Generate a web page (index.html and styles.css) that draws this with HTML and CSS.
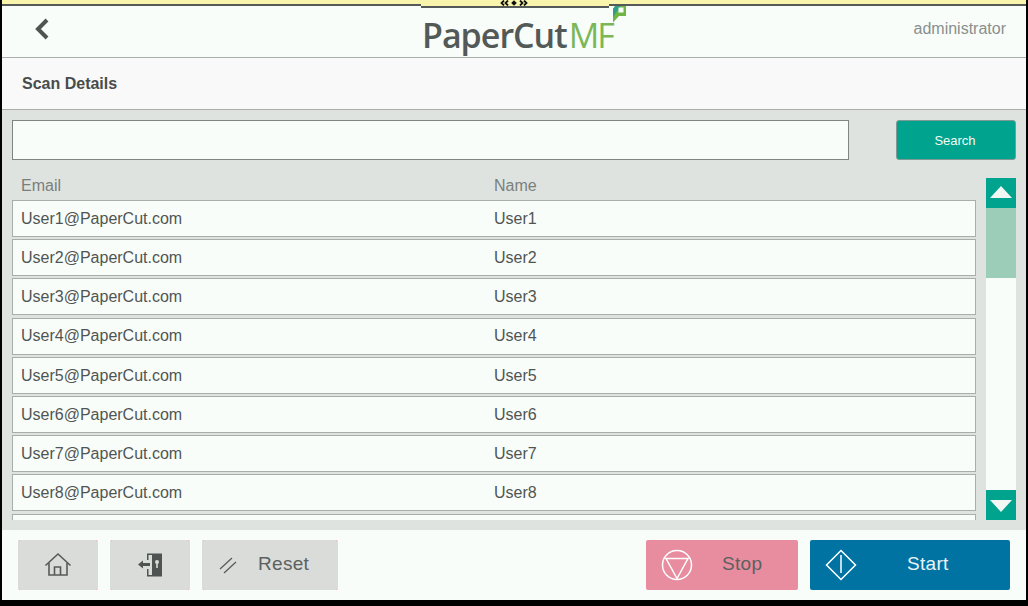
FILE: index.html
```html
<!DOCTYPE html>
<html lang="en">
<head>
    <meta charset="UTF-8">
    <title>Scan Details</title>
    <link rel="stylesheet" href="styles.css">
</head>
<body>
    <div class="screen">
        <div class="banner">
            <div class="banner-tab">
                <svg class="banner-grip" width="28" height="6" viewBox="0 0 28 6">
                    <path d="M4 0.500 1.500 3 4 5.500M8 0.500 5.500 3 8 5.500M20 0.500 22.500 3 20 5.500M24 0.500 26.500 3 24 5.500" fill="none" stroke="#111" stroke-width="1.800"/>
                    <path d="M14 0.200 16.800 3 14 5.800 11.200 3Z" fill="#111"/>
                </svg>
            </div>
        </div>
        <header class="topbar">
            <svg class="back" width="18" height="24" viewBox="0 0 18 24">
                <path d="M14 3 5 12l9 9" fill="none" stroke="#4f5452" stroke-width="4"/>
            </svg>
            <div class="logo">
                <span class="logo-paper">PaperCut</span><span class="logo-mf">MF</span>
                <svg class="logo-mark" width="14" height="18" viewBox="0 0 14 18">
                    <path d="M2.500 0.500H13V11H6L0 17.500V4Z" fill="#6fb544"/>
                    <path d="M2.500 0.500H8L0 12V4Z" fill="#2c9f86"/>
                    <path d="M5.500 2.500H10.500V7.500H5.500Z" fill="#f8fcf9"/>
                </svg>
            </div>
            <div class="user">administrator</div>
        </header>
        <div class="titlebar">Scan Details</div>
        <main class="content">
            <div class="search">
                <input class="search-input" type="text">
                <button class="search-btn">Search</button>
            </div>
            <div class="list-area">
                <div class="list">
                    <div class="list-head"><span class="col-email">Email</span><span>Name</span></div>
                    <div class="row"><span class="col-email">User1@PaperCut.com</span><span>User1</span></div>
                    <div class="row"><span class="col-email">User2@PaperCut.com</span><span>User2</span></div>
                    <div class="row"><span class="col-email">User3@PaperCut.com</span><span>User3</span></div>
                    <div class="row"><span class="col-email">User4@PaperCut.com</span><span>User4</span></div>
                    <div class="row"><span class="col-email">User5@PaperCut.com</span><span>User5</span></div>
                    <div class="row"><span class="col-email">User6@PaperCut.com</span><span>User6</span></div>
                    <div class="row"><span class="col-email">User7@PaperCut.com</span><span>User7</span></div>
                    <div class="row"><span class="col-email">User8@PaperCut.com</span><span>User8</span></div>
                    <div class="row"></div>
                </div>
                <div class="scrollbar">
                    <div class="scroll-btn"><span class="arrow-up"></span></div>
                    <div class="scroll-thumb"></div>
                    <div class="scroll-track"></div>
                    <div class="scroll-btn"><span class="arrow-down"></span></div>
                </div>
            </div>
        </main>
        <footer class="footer">
            <button class="btn btn-icon">
                <svg width="28" height="26" viewBox="0 0 28 26">
                    <path d="M1.500 13.500 14 2l12.500 11.500" fill="none" stroke="#555a58" stroke-width="1.600"/>
                    <path d="M5 11V23H23V11M10.500 23V15H16.500V23" fill="none" stroke="#555a58" stroke-width="1.600"/>
                </svg>
            </button>
            <button class="btn btn-icon">
                <svg width="26" height="24" viewBox="0 0 26 24">
                    <path d="M10 0.500H25V23.500H10V16H11.500V22H15V2H11.500V7H10Z" fill="#4f5452"/>
                    <path d="M15 2H25V22H15Z" fill="#4f5452"/>
                    <path d="M1 11.500 6 7.500V10H13V13H6V15.500Z" fill="#4f5452"/>
                    <circle cx="20" cy="9" r="2" fill="#d9dcd9"/>
                    <rect x="19.200" y="9" width="1.600" height="6" fill="#d9dcd9"/>
                </svg>
            </button>
            <button class="btn btn-reset">
                <svg width="18" height="18" viewBox="0 0 18 18">
                    <path d="M1 13 13 2M5 17 17 6" fill="none" stroke="#555a58" stroke-width="1.200"/>
                </svg>
                <span>Reset</span>
            </button>
            <button class="btn btn-stop">
                <svg width="32" height="32" viewBox="0 0 32 32">
                    <circle cx="16" cy="16" r="14.500" fill="none" stroke="#fff" stroke-width="1.500"/>
                    <path d="M5 9.500H27L16 29.500Z" fill="none" stroke="#fff" stroke-width="1.500"/>
                </svg>
                <span>Stop</span>
            </button>
            <button class="btn btn-start">
                <svg width="32" height="32" viewBox="0 0 32 32">
                    <path d="M16 1.500 30.500 16 16 30.500 1.500 16Z" fill="none" stroke="#fff" stroke-width="1.500"/>
                    <path d="M16 6V24" fill="none" stroke="#fff" stroke-width="1.500"/>
                </svg>
                <span>Start</span>
            </button>
        </footer>
    </div>
</body>
</html>
```

FILE: styles.css
```css
* {
    box-sizing: border-box;
}

body {
    margin: 0;
    width: 1028px;
    height: 606px;
    overflow: hidden;
    background-color: #000;
    font-family: "Liberation Sans", Arial, sans-serif;
}

.screen {
    position: relative;
    margin-left: 2px;
    width: 1024px;
    height: 600px;
    display: flex;
    flex-direction: column;
    background-color: #f8fdfa;
}

.banner {
    position: absolute;
    z-index: 2;
    top: 0;
    left: 0;
    right: 0;
    height: 6px;
    display: flex;
    justify-content: center;
    background-color: #f9f5ac;
    border-bottom: 2px solid #555a58;
}

.banner-tab {
    width: 188px;
    height: 8px;
    flex-shrink: 0;
    margin-left: 2px;
    display: flex;
    justify-content: center;
    background-color: #f9f5ac;
    border-bottom: 2px solid #555a58;
}

.banner-grip {
    display: block;
    margin-right: 2px;
}

.topbar {
    height: 58px;
    flex-shrink: 0;
    display: flex;
    align-items: center;
    position: relative;
    padding-left: 31px;
    border-bottom: 1px solid #a9aeab;
}

.logo {
    position: absolute;
    top: 13px;
    left: 420px;
    display: flex;
    align-items: baseline;
    font-family: "Open Sans", sans-serif;
    font-size: 34px;
    line-height: 44px;
    letter-spacing: -1px;
}

.logo-paper {
    color: #535957;
    font-weight: 600;
}

.logo-mf {
    margin-left: 2px;
    color: #7cb755;
    font-weight: 400;
    letter-spacing: -2px;
}

.logo-mark {
    position: absolute;
    top: -8px;
    left: 191px;
}

.user {
    margin-left: auto;
    margin-right: 20px;
    font-size: 16px;
    color: #8a8f8c;
}

.titlebar {
    height: 52px;
    flex-shrink: 0;
    display: flex;
    align-items: center;
    padding-left: 20px;
    font-size: 16px;
    font-weight: bold;
    color: #484c4a;
    background-color: #f8f9f8;
    border-bottom: 1px solid #a9aeab;
}

.content {
    height: 420px;
    flex-shrink: 0;
    padding: 10px 10px 10px;
    background-color: #dfe3e0;
}

.search {
    display: flex;
    justify-content: space-between;
    height: 40px;
}

.search-input {
    width: 837px;
    height: 40px;
    background-color: #f8fdfa;
    border: 1px solid #7f8583;
    outline: none;
}

.search-btn {
    width: 120px;
    height: 40px;
    padding: 0 2px 0 0;
    font-family: inherit;
    font-size: 13px;
    color: #f2faf6;
    background-color: #00a38d;
    border: 1px solid #7f9a94;
    border-radius: 3px;
}

.list-area {
    display: flex;
    justify-content: space-between;
    margin-top: 18px;
    height: 342px;
}

.list {
    width: 964px;
    overflow: hidden;
}

.list-head {
    height: 22px;
    display: flex;
    padding: 0 0 0 9px;
    font-size: 16px;
    line-height: 15px;
    color: #7a7f7c;
}

.row {
    display: flex;
    align-items: center;
    height: 37px;
    margin-bottom: 2.200px;
    padding: 0.800px 0 0 8px;
    font-size: 16px;
    color: #505553;
    background-color: #f8fdfa;
    border: 1px solid #a9aeab;
}

.col-email {
    width: 473px;
}

.scrollbar {
    width: 30px;
    display: flex;
    flex-direction: column;
}

.scroll-btn {
    height: 30px;
    flex-shrink: 0;
    display: flex;
    align-items: center;
    justify-content: center;
    background-color: #00a38d;
}

.arrow-up {
    margin-bottom: 2px;
    border-left: 11px solid transparent;
    border-right: 11px solid transparent;
    border-bottom: 12px solid #f2f7f4;
}

.arrow-down {
    margin-top: 2px;
    border-left: 11px solid transparent;
    border-right: 11px solid transparent;
    border-top: 12px solid #f2f7f4;
}

.scroll-thumb {
    height: 70px;
    flex-shrink: 0;
    background-color: #9ccdb9;
}

.scroll-track {
    flex: 1;
    background-color: #f8fdfa;
}

.footer {
    flex: 1;
    display: flex;
    align-items: flex-start;
    gap: 12px;
    padding: 10px 16px 0;
}

.btn {
    height: 50px;
    padding: 0;
    display: flex;
    align-items: center;
    font-family: inherit;
    font-size: 19px;
    letter-spacing: 0.3px;
    border: none;
    border-radius: 2px;
}

.btn span {
    margin-bottom: 2px;
}

.btn-icon,
.btn-reset {
    color: #5c615f;
    background-color: #d9dcd9;
    /* pink pixels left in the corners */
    background-image:
        linear-gradient(#f0a8b8, #f0a8b8),
        linear-gradient(#f0a8b8, #f0a8b8),
        linear-gradient(#f0a8b8, #f0a8b8),
        linear-gradient(#f0a8b8, #f0a8b8);
    background-size: 2px 1px;
    background-repeat: no-repeat;
    background-position: left top, right top, left bottom, right bottom;
}

.btn-icon {
    width: 80px;
    justify-content: center;
}

.btn-reset {
    width: 136px;
    padding-left: 17px;
}

.btn-reset span {
    margin-left: 21px;
}

.btn-stop {
    width: 152px;
    margin-left: auto;
    padding-left: 15px;
    color: #5c615f;
    background-color: #e88c9f;
}

.btn-stop span {
    margin-left: 29px;
}

.btn-start {
    width: 200px;
    padding-left: 15px;
    color: #e8f4f8;
    background-color: #0073a3;
}

.btn-start span {
    margin-left: 50px;
}
```
